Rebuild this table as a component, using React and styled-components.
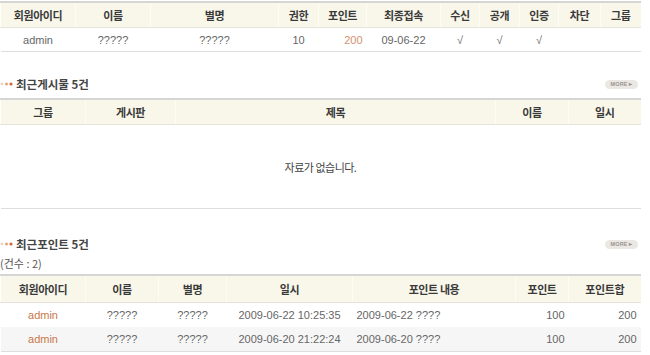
import React from "react";
import styled, { createGlobalStyle } from "styled-components";

const Global = createGlobalStyle`
  html, body { margin: 0; padding: 0; background: #fff; }
  body { font-family: "Liberation Sans", "Noto Sans CJK KR", sans-serif; font-size: 11px; color: #666; }
`;

const Page = styled.div`
  width: 640px;
  padding-top: 1px;
`;

const Table = styled.table`
  width: 640px;
  border-collapse: collapse;
  table-layout: fixed;
  border-top: 2px solid #d6d6d6;
  border-bottom: 1px solid #dedede;
`;

const Th = styled.th`
  height: ${(p) => p.$h || 24}px;
  padding: 0;
  background: #f9f7ea;
  border-bottom: 1px solid #e6e4da;
  border-left: 1px solid ${(p) => (p.$first ? "transparent" : "#fdfcf6")};
  font-family: "Noto Sans CJK KR", sans-serif;
  font-size: 11px;
  letter-spacing: -0.4px;
  font-weight: 700;
  color: #3a3a3a;
  text-align: center;
`;

const Td = styled.td`
  height: ${(p) => p.$h || 23}px;
  padding: 0 ${(p) => (p.$align === "right" || p.$align === "left" ? "4px" : "0")};
  text-align: ${(p) => p.$align || "center"};
  color: ${(p) => p.$color || "#666"};
  font-family: "Liberation Sans", "Noto Sans CJK KR", sans-serif;
  font-size: 11px;
  white-space: nowrap;
  overflow: hidden;
`;

const Row = styled.tr`
  background: ${(p) => (p.$alt ? "#f6f6f6" : "#fff")};
`;

const Empty = styled.td`
  height: 81px;
  text-align: center;
  font-family: "Noto Sans CJK KR", sans-serif;
  font-size: 11px;
  letter-spacing: -0.5px;
  color: #444;
`;

const TitleBar = styled.div`
  display: flex;
  align-items: center;
  justify-content: space-between;
  height: 20px;
  margin-top: ${(p) => p.$mt}px;
  margin-bottom: ${(p) => p.$mb}px;
`;

const Title = styled.div`
  display: flex;
  align-items: center;
  gap: 2px;
  font-family: "Noto Sans CJK KR", sans-serif;
  font-size: 11.5px;
  font-weight: 700;
  color: #444;
`;

const More = styled.span`
  display: inline-flex;
  align-items: center;
  justify-content: center;
  width: 33px;
  height: 9px;
  border-radius: 5px;
  background: #ebe8e4;
  color: #9a9590;
  font-family: "Liberation Sans", sans-serif;
  font-size: 5.5px;
  font-weight: 700;
  letter-spacing: 0.2px;
  margin-right: 2px;
`;

const Count = styled.div`
  height: 18px;
  line-height: 18px;
  margin-bottom: 2px;
  font-family: "Noto Sans CJK KR", sans-serif;
  font-size: 11px;
  color: #555;
`;

const Dots = () => (
  <svg width="14" height="6" viewBox="0 0 14 6">
    <circle cx="2" cy="3" r="1.4" fill="#ecd3c0" />
    <circle cx="6.5" cy="3" r="1.5" fill="#e6a27a" />
    <circle cx="11" cy="3" r="1.6" fill="#d8642e" />
  </svg>
);

const Section = ({ title, mt, mb }) => (
  <TitleBar $mt={mt} $mb={mb}>
    <Title>
      <Dots />
      {title}
    </Title>
    <More>MORE ▸</More>
  </TitleBar>
);

const Head = ({ cols, h }) => (
  <>
    <colgroup>
      {cols.map((c, i) => (
        <col key={i} style={{ width: c[1] }} />
      ))}
    </colgroup>
    <thead>
      <tr>
        {cols.map((c, i) => (
          <Th key={i} $first={i === 0} $h={h}>
            {c[0]}
          </Th>
        ))}
      </tr>
    </thead>
  </>
);

const memberCols = [
  ["회원아이디", 75],
  ["이름", 75],
  ["별명", 128],
  ["권한", 40],
  ["포인트", 48],
  ["최종접속", 74],
  ["수신", 39],
  ["공개", 40],
  ["인증", 39],
  ["차단", 42],
  ["그룹", 40],
];

const postCols = [
  ["그룹", 85],
  ["게시판", 90],
  ["제목", 320],
  ["이름", 73],
  ["일시", 72],
];

const pointCols = [
  ["회원아이디", 85],
  ["이름", 73],
  ["별명", 68],
  ["일시", 126],
  ["포인트 내용", 163],
  ["포인트", 53],
  ["포인트합", 72],
];

const points = [
  ["2009-06-22 10:25:35", "2009-06-22 ????"],
  ["2009-06-20 21:22:24", "2009-06-20 ????"],
];

export default function App() {
  return (
    <Page>
      <Global />
      <Table>
        <Head cols={memberCols} />
        <tbody>
          <Row>
            <Td>admin</Td>
            <Td>?????</Td>
            <Td>?????</Td>
            <Td>10</Td>
            <Td $align="right" $color="#d49070">200</Td>
            <Td>09-06-22</Td>
            <Td>√</Td>
            <Td>√</Td>
            <Td>√</Td>
            <Td></Td>
            <Td></Td>
          </Row>
        </tbody>
      </Table>

      <Section title="최근게시물 5건" mt={22} mb={4} />
      <Table>
        <Head cols={postCols} />
        <tbody>
          <tr>
            <Empty colSpan={5}>자료가 없습니다.</Empty>
          </tr>
        </tbody>
      </Table>

      <Section title="최근포인트 5건" mt={25} mb={0} />
      <Count>(건수 : 2)</Count>
      <Table>
        <Head cols={pointCols} h={26} />
        <tbody>
          {points.map((p, i) => (
            <Row key={i} $alt={i === 1}>
              <Td $h={24} $color="#c8784a">admin</Td>
              <Td $h={24}>?????</Td>
              <Td $h={24}>?????</Td>
              <Td $h={24}>{p[0]}</Td>
              <Td $h={24} $align="left">{p[1]}</Td>
              <Td $h={24} $align="right">100</Td>
              <Td $h={24} $align="right">200</Td>
            </Row>
          ))}
        </tbody>
      </Table>
    </Page>
  );
}
